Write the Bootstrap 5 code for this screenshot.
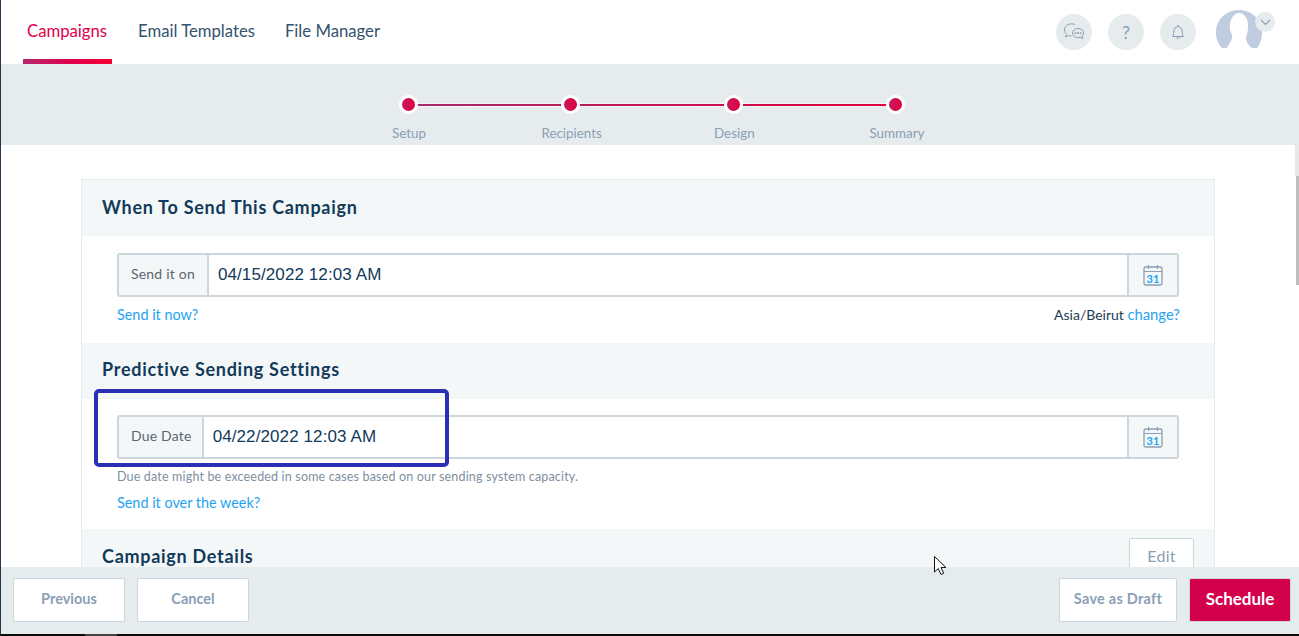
<!DOCTYPE html>
<html lang="en">
<head>
<meta charset="utf-8">
<title>Schedule campaign</title>
<link href="https://cdn.jsdelivr.net/npm/bootstrap@5.3.0/dist/css/bootstrap.min.css" rel="stylesheet">
<style>
html,body{height:100%;overflow:hidden;}
body{font-family:Lato,"Noto Sans",sans-serif;color:#123a5a;background:#fff;}
.shell{height:636px;border-left:1px solid #26384d;border-bottom:2px solid #0b0b0b;position:relative;}
.topbar{height:64px;background:#fff;padding:0 24px 0 22px;}
.tab-link{display:block;height:64px;line-height:62px;padding:0 4px;font-size:16.7px;color:#34526e;text-decoration:none;position:relative;margin-right:22px;}
.tab-on{color:#e0004d;width:89px;}
.tab-on::after{content:"";position:absolute;left:0;right:0;bottom:0;height:5px;background:linear-gradient(90deg,#b5286d,#e0004d 55%,#f5002f);}
.round-ico{width:36px;height:36px;border-radius:50%;background:#e6ebee;color:#8aa0b6;font-size:18px;}
.avatar-wrap{width:59px;height:60px;position:relative;margin-left:4px;}
.avatar-pic{position:absolute;left:0;top:8px;}
.avatar-chev{position:absolute;right:0;top:10px;width:20px;height:20px;border-radius:50%;background:#e6ebee;}
.stepband{height:81px;background:#e6ebee;}
.stepper{width:544px;margin-left:379px;position:relative;padding-top:31px;}
.stepline{position:absolute;left:28px;width:488px;top:39.5px;height:2px;background:linear-gradient(90deg,#a82a6a,#e0003c);box-shadow:0 0 0 1px #f4f6f8;}
.stepcol{width:56px;position:relative;font-size:13.4px;color:#8a9fb3;text-align:center;white-space:nowrap;}
.stepdot{width:19px;height:19px;border-radius:50%;border:3px solid #fff;background:linear-gradient(90deg,#c71a60,#e0003c);margin:0 auto 11px;}
.stepname{line-height:16px;margin-left:-28px;margin-right:-30px;}
.scroller{flex:1 1 auto;min-height:0;overflow:hidden;padding:34px 84px 0 80px;}
.pane{border:1px solid #e7ebee;border-bottom:0;background:#fff;}
.pane-head{height:56px;background:#f4f7f8;padding:0 20px 2px;font-size:18px;font-weight:700;color:#123a5a;letter-spacing:.72px;}
.pane-head-up{padding-bottom:4px;}
.pane-body{padding:17px 35px 0 35px;}
.pane-body-due{padding-top:16px;}
.date-group{height:44px;border:2px solid #cdd5dd;border-radius:3px;background:#fff;overflow:hidden;}
.date-label{background:#f4f7f8;border-right:2px solid #cdd5dd;color:#5a6670;font-size:14px;padding:0 12px 3px;letter-spacing:.2px;}
.date-label-due{padding-right:10px;}
.date-value{font-family:"Liberation Sans",Arial,sans-serif;font-size:17px;color:#123a5a;padding:0 9px;letter-spacing:.1px;}
.date-cal{width:50px;background:#f4f7f8;border-left:2px solid #cdd5dd;}
.blue-link{color:#1fa3f0;text-decoration:none;font-size:14.4px;}
.tz{font-size:14px;color:#1d3a52;margin-right:-1px;line-height:18px;}
.tz .blue-link{font-size:14.8px;}
.hint{font-size:12.5px;color:#7e8f9f;letter-spacing:.17px;}
.ghost-btn{background:#fff;border:1px solid #cdd5dd;border-radius:2px;color:#8aa0b6;font-weight:700;font-size:14.5px;height:44px;padding:0 0 3px;}
.draft-btn{letter-spacing:.25px;}
.edit-btn{width:65px;height:36px;font-weight:400;font-size:16px;color:#8a9fb3;align-self:flex-start;margin-top:9px;letter-spacing:.3px;background:#fff;border:1px solid #cdd5dd;border-radius:2px;padding:0;}
.footbar{height:67px;background:#e6ebee;padding:11px 8px 0 12px;flex:0 0 auto;}
.go-btn{background:#d3004c;border:1px solid #cdd5dd;border-radius:2px;color:#fff;font-weight:700;font-size:17px;width:102px;height:44px;padding:0 0 3px;}
.annot{position:absolute;left:93px;top:389px;width:355px;height:78px;border:4px solid #2b2fb3;border-radius:5px;pointer-events:none;}
.cursor-mark{position:absolute;left:932px;top:555px;}
.scroll-track{position:absolute;right:0;top:145px;width:4px;height:31px;background:#e8e8e8;}
.scroll-thumb{position:absolute;right:0;top:176px;width:3px;height:109px;background:#bdbdbd;}
.taskbar-bit{position:absolute;left:84px;bottom:-2px;width:32px;height:2px;background:#444;}
</style>
</head>
<body>
<div class="shell d-flex flex-column">
  <nav class="topbar d-flex align-items-center justify-content-between flex-shrink-0">
    <div class="d-flex">
      <a class="tab-link tab-on" href="#">Campaigns</a>
      <a class="tab-link" href="#">Email Templates</a>
      <a class="tab-link" href="#">File Manager</a>
    </div>
    <div class="d-flex align-items-center gap-3">
      <span class="round-ico d-flex align-items-center justify-content-center">
        <svg width="22" height="22" viewBox="0 0 22 22" fill="none" stroke="#8aa0b6" stroke-width="1"><path d="M12 3.500C7 1.500 1.500 4 1.500 9c0 2 1 3.500 2 4.500L2.500 16l3-1.500c1 .4 2 .6 3 .6"/><path d="M15 7.500c3.500 0 5.500 2 5.500 4.500 0 1.500-.6 2.500-1.500 3.300l.8 2.200-2.800-1.200c-2.800.9-7.500 0-7.500-4.300 0-2.500 2.500-4.500 5.500-4.500z" fill="#e6ebee"/><circle cx="12.500" cy="12" r=".6" fill="#8aa0b6"/><circle cx="15" cy="12" r=".6" fill="#8aa0b6"/><circle cx="17.500" cy="12" r=".6" fill="#8aa0b6"/></svg>
      </span>
      <span class="round-ico d-flex align-items-center justify-content-center">?</span>
      <span class="round-ico d-flex align-items-center justify-content-center">
        <svg width="14" height="16" viewBox="0 0 14 16" fill="none" stroke="#8aa0b6" stroke-width="1"><path d="M1.500 12.500c1-1 1.200-2 1.200-4.500 0-3 1.800-5.500 4.300-5.500s4.300 2.500 4.300 5.500c0 2.500.2 3.500 1.200 4.500z"/><path d="M5.500 13c0 2 3 2 3 0"/><path d="M7 2.500V1"/></svg>
      </span>
      <span class="avatar-wrap d-block">
        <svg class="avatar-pic" width="47" height="40" viewBox="0 0 47 40"><path d="M23 0C10 0 0 10 0 22 0 29 2 34 6 38L11 38C13 33 17 30 16 25 14 21 13.500 18 14 15 14.500 8 18 3 23 3 28 3 32 8 32 15 32.500 20 31 24 30 28 30 32 33 36 36 38L41 38C44.500 34 46 28 46 22 46 10 36 0 23 0z" fill="#c0cde1"/></svg>
        <span class="avatar-chev d-flex align-items-center justify-content-center"><svg width="11" height="7" viewBox="0 0 11 7" fill="none" stroke="#8aa0b6" stroke-width="1.200"><path d="M1 1l4.500 4.500L10 1"/></svg></span>
      </span>
    </div>
  </nav>
  <div class="stepband flex-shrink-0">
    <div class="stepper d-flex justify-content-between">
      <div class="stepline"></div>
      <div class="stepcol"><div class="stepdot"></div><div class="stepname">Setup</div></div>
      <div class="stepcol"><div class="stepdot"></div><div class="stepname">Recipients</div></div>
      <div class="stepcol"><div class="stepdot"></div><div class="stepname">Design</div></div>
      <div class="stepcol"><div class="stepdot"></div><div class="stepname">Summary</div></div>
    </div>
  </div>
  <main class="scroller">
    <div class="pane">
      <div class="pane-head d-flex align-items-center">When To Send This Campaign</div>
      <div class="pane-body" style="height:107px">
        <div class="date-group d-flex align-items-stretch">
          <div class="date-label d-flex align-items-center">Send it on</div>
          <div class="date-value d-flex align-items-center flex-grow-1">04/15/2022 12:03 AM</div>
          <div class="date-cal d-flex align-items-center justify-content-center">
            <svg width="20" height="22" viewBox="0 0 20 22" fill="none"><rect x="1" y="3" width="18" height="18" rx="1.500" stroke="#8aa0b6" stroke-width="1.300"/><path d="M1 7.500h18M5.500 1v4M14.500 1v4" stroke="#8aa0b6" stroke-width="1.200"/><text x="10" y="18.500" font-size="11" font-weight="700" text-anchor="middle" font-family="Lato,sans-serif" fill="#1fa3f0">31</text></svg>
          </div>
        </div>
        <div class="d-flex justify-content-between mt-2" style="line-height:20px">
          <a class="blue-link" href="#">Send it now?</a>
          <span class="tz">Asia/Beirut <a class="blue-link" href="#">change?</a></span>
        </div>
      </div>
      <div class="pane-head pane-head-up d-flex align-items-center">Predictive Sending Settings</div>
      <div class="pane-body pane-body-due" style="height:130px">
        <div class="date-group d-flex align-items-stretch">
          <div class="date-label date-label-due d-flex align-items-center">Due Date</div>
          <div class="date-value d-flex align-items-center flex-grow-1">04/22/2022 12:03 AM</div>
          <div class="date-cal d-flex align-items-center justify-content-center">
            <svg width="20" height="22" viewBox="0 0 20 22" fill="none"><rect x="1" y="3" width="18" height="18" rx="1.500" stroke="#8aa0b6" stroke-width="1.300"/><path d="M1 7.500h18M5.500 1v4M14.500 1v4" stroke="#8aa0b6" stroke-width="1.200"/><text x="10" y="18.500" font-size="11" font-weight="700" text-anchor="middle" font-family="Lato,sans-serif" fill="#1fa3f0">31</text></svg>
          </div>
        </div>
        <div class="hint" style="margin-top:9px;line-height:18px">Due date might be exceeded in some cases based on our sending system capacity.</div>
        <div style="margin-top:6px;line-height:20px"><a class="blue-link" href="#">Send it over the week?</a></div>
      </div>
      <div class="pane-head d-flex justify-content-between" style="height:60px;padding-bottom:0">
        <span style="line-height:54px">Campaign Details</span>
        <button class="edit-btn" type="button">Edit</button>
      </div>
    </div>
  </main>
  <footer class="footbar d-flex justify-content-between">
    <div class="d-flex gap-2">
      <button class="ghost-btn" style="width:112px" type="button">Previous</button>
      <button class="ghost-btn" style="width:112px;margin-left:4px" type="button">Cancel</button>
    </div>
    <div class="d-flex gap-2">
      <button class="ghost-btn draft-btn" style="width:118px;margin-right:4px" type="button">Save as Draft</button>
      <button class="go-btn" type="button">Schedule</button>
    </div>
  </footer>
  <div class="annot"></div>
  <div class="scroll-track"></div>
  <div class="scroll-thumb"></div>
  <div class="taskbar-bit"></div>
  <svg class="cursor-mark" width="16" height="22" viewBox="0 0 16 22"><path d="M1.500 1.500v15.500l3.800-3.500 2.700 6 2.700-1.200-2.700-5.800h5z" fill="#fff" stroke="#111" stroke-width="1"/></svg>
</div>
<script src="https://cdn.jsdelivr.net/npm/bootstrap@5.3.0/dist/js/bootstrap.bundle.min.js"></script>
</body>
</html>
